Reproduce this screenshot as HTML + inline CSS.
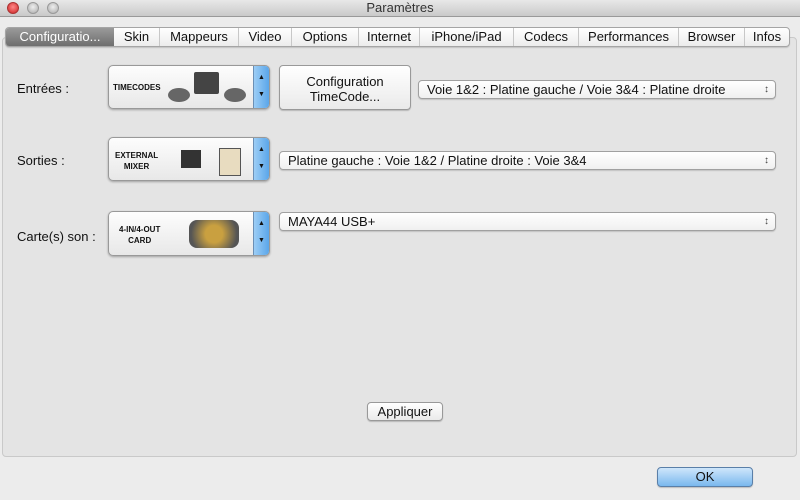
<!DOCTYPE html>
<html><head><style>
*{box-sizing:border-box;margin:0;padding:0}
body{width:800px;height:500px;background:#ececec;font-family:"Liberation Sans",sans-serif;font-size:13px;color:#111;position:relative;overflow:hidden}
.abs{position:absolute}
.title{left:0;top:0;width:800px;height:17px;background:linear-gradient(#e8e8e8,#c9c9c9);border-bottom:1px solid #999;text-align:center;font-size:13px;color:#333;line-height:16px}
.dot{top:2px;width:12px;height:12px;border-radius:50%;background:radial-gradient(circle at 50% 40%,#eee,#aaa);border:1px solid #999}
.panel{left:2px;top:37px;width:795px;height:420px;background:#e4e4e4;border:1px solid #c9c9c9;border-radius:4px}
.tabs{left:5px;top:27px;width:785px;height:20px;background:linear-gradient(#fff,#ececec);border:1px solid #a5a5a5;border-radius:4px;display:flex;box-shadow:0 1px 1px rgba(0,0,0,.15)}
.tab{height:18px;line-height:18px;text-align:center;border-left:1px solid #c8c8c8;font-size:13px}
.tab.sel{background:linear-gradient(#9a9a9a,#6e6e6e);color:#fff;border:none;border-radius:3px 0 0 3px}
.lbl{font-size:13px}
.img{border:1px solid #999;border-radius:5px;background:linear-gradient(#fdfdfd,#e8e8e8);box-shadow:0 1px 2px rgba(0,0,0,.3);overflow:hidden}
.img .step{position:absolute;right:0;top:0;width:16px;height:100%;background:linear-gradient(90deg,#9ccdf5,#5aa6ea);border-left:1px solid #6b8fb5;font-size:7px;text-align:center}
.img b{position:absolute;font-family:"Liberation Sans",sans-serif;font-size:8px;font-weight:900;text-align:center;line-height:11px}
.sel2{height:19px;border:1px solid #a0a0a0;border-radius:4px;background:linear-gradient(#fff,#f0f0f0);box-shadow:0 1px 1px rgba(0,0,0,.15);padding-left:8px;line-height:17px;font-size:13px}
.sel2:after{content:"\2195";position:absolute;right:6px;top:0;font-size:10px;color:#444}
.btn{border:1px solid #999;border-radius:4px;background:linear-gradient(#fff,#eaeaea);text-align:center;box-shadow:0 1px 1px rgba(0,0,0,.2)}
</style></head><body>
<div class="abs title">Paramètres</div>
<div class="abs dot" style="left:7px;background:radial-gradient(circle at 50% 40%,#f88,#c22);border-color:#a33"></div>
<div class="abs dot" style="left:27px"></div>
<div class="abs dot" style="left:47px"></div>
<div class="abs panel"></div>
<div class="abs tabs">
<div class="tab sel" style="width:108px">Configuratio...</div>
<div class="tab" style="width:45px;border-left:none">Skin</div>
<div class="tab" style="width:79px">Mappeurs</div>
<div class="tab" style="width:53px">Video</div>
<div class="tab" style="width:67px">Options</div>
<div class="tab" style="width:61px">Internet</div>
<div class="tab" style="width:94px">iPhone/iPad</div>
<div class="tab" style="width:65px">Codecs</div>
<div class="tab" style="width:100px">Performances</div>
<div class="tab" style="width:66px">Browser</div>
<div class="tab" style="width:45px">Infos</div>
</div>

<div class="abs lbl" style="left:17px;top:81px">Entrées :</div>
<div class="abs img" style="left:108px;top:65px;width:162px;height:44px">
<b style="left:4px;top:16px">TIMECODES</b>
<div class="abs" style="left:85px;top:6px;width:25px;height:22px;background:#444;border-radius:2px"></div>
<div class="abs" style="left:59px;top:22px;width:22px;height:14px;background:#666;border-radius:50%"></div>
<div class="abs" style="left:115px;top:22px;width:22px;height:14px;background:#666;border-radius:50%"></div>
<div class="step"><div style="margin-top:8px">▲</div><div style="margin-top:10px">▼</div></div></div>
<div class="abs btn" style="left:279px;top:65px;width:132px;height:45px;padding-top:8px;line-height:15px">Configuration<br>TimeCode...</div>
<div class="abs sel2" style="left:418px;top:80px;width:358px">Voie 1&amp;2 : Platine gauche / Voie 3&amp;4 : Platine droite</div>

<div class="abs lbl" style="left:17px;top:153px">Sorties :</div>
<div class="abs img" style="left:108px;top:137px;width:162px;height:44px">
<b style="left:6px;top:12px">EXTERNAL<br>MIXER</b>
<div class="abs" style="left:72px;top:12px;width:20px;height:18px;background:#333"></div>
<div class="abs" style="left:110px;top:10px;width:22px;height:28px;background:#e8dcc0;border:1px solid #555"></div>
<div class="step"><div style="margin-top:8px">▲</div><div style="margin-top:10px">▼</div></div></div>
<div class="abs sel2" style="left:279px;top:151px;width:497px">Platine gauche : Voie 1&amp;2 / Platine droite : Voie 3&amp;4</div>

<div class="abs lbl" style="left:17px;top:229px">Carte(s) son :</div>
<div class="abs img" style="left:108px;top:211px;width:162px;height:45px">
<b style="left:10px;top:12px">4-IN/4-OUT<br>CARD</b>
<div class="abs" style="left:80px;top:8px;width:50px;height:28px;background:radial-gradient(circle,#c9a040 30%,#555 80%);border-radius:8px"></div>
<div class="step"><div style="margin-top:8px">▲</div><div style="margin-top:10px">▼</div></div></div>
<div class="abs sel2" style="left:279px;top:212px;width:497px">MAYA44 USB+</div>

<div class="abs btn" style="left:367px;top:402px;width:76px;height:19px;line-height:17px">Appliquer</div>
<div class="abs btn" style="left:657px;top:467px;width:96px;height:20px;line-height:18px;background:linear-gradient(#cfe6fb,#7ab8ee);border-color:#5a7fa8">OK</div>
</body></html>
